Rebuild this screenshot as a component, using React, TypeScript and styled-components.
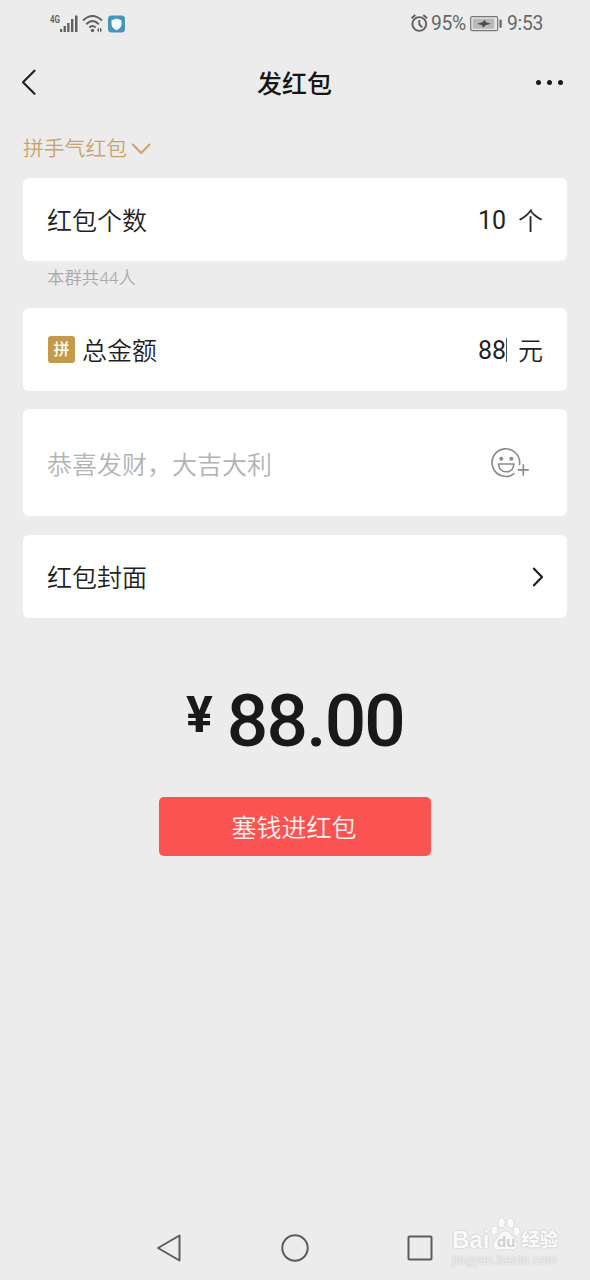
import React from "react";
import styled, { createGlobalStyle } from "styled-components";

const GlobalStyle = createGlobalStyle`
  * { box-sizing: border-box; }
  body {
    margin: 0;
    background: #ececec;
    color: #1f1f1f;
    font-family: Roboto, "Noto Sans CJK SC", sans-serif;
  }
  svg { display: block; flex: none; }
`;

const Screen = styled.div`
  width: 590px;
  height: 1280px;
  display: flex;
  flex-direction: column;
  overflow: hidden;
  background: #ececec;
`;

const StatusBar = styled.header`
  height: 47px;
  padding: 0 47px 0 49px;
  display: flex;
  justify-content: space-between;
  align-items: center;
  color: #666;
  font-size: 19.3px;
`;

const StatusGroup = styled.div`
  display: flex;
  align-items: center;
`;

const StatusText = styled.span<{ $width: number }>`
  width: ${(p) => p.$width}px;
  padding-top: 1px;
  line-height: 24px;
  white-space: nowrap;
  letter-spacing: -0.3px;
`;

const TitleBar = styled.div`
  height: 72px;
  padding: 0 27px 0 20px;
  display: grid;
  grid-template-columns: 60px 1fr 54px;
  align-items: center;
`;

const Title = styled.h1`
  margin: 0;
  padding-top: 3px;
  text-align: center;
  font-size: 25px;
  line-height: 36px;
  font-weight: 500;
  color: #161616;
`;

const MoreDots = styled.div`
  display: flex;
  justify-content: flex-end;
  gap: 6px;
  margin-top: -2px;
  span {
    width: 5px;
    height: 5px;
    border-radius: 50%;
    background: #1a1a1a;
  }
`;

const Form = styled.main`
  flex: 1;
  padding: 0 23px;
  display: flex;
  flex-direction: column;
`;

const TypePicker = styled.div`
  height: 59px;
  padding-top: 1px;
  display: flex;
  align-items: center;
  gap: 4px;
  color: #c8a46c;
  font-size: 20.8px;
  font-weight: 350;
  line-height: 30px;
`;

const Card = styled.section<{ $height?: number; $gap?: number }>`
  height: ${(p) => p.$height ?? 83}px;
  margin-bottom: ${(p) => p.$gap ?? 18}px;
  padding: 0 24px;
  display: flex;
  align-items: center;
  justify-content: space-between;
  flex: none;
  border-radius: 6px;
  background: #fff;
  font-size: 25px;
  line-height: 36px;
`;

const Label = styled.div`
  display: flex;
  align-items: center;
  gap: 7px;
  padding-top: 4px;
  font-weight: 350;
`;

const Badge = styled.span`
  width: 27px;
  height: 27px;
  margin: -5px 0 0 1px;
  border-radius: 3px;
  background: #c39a4b;
  color: #fff;
  font-size: 16px;
  font-weight: 500;
  line-height: 28px;
  text-align: center;
`;

const Value = styled.div`
  display: flex;
  align-items: center;
  padding-top: 3px;
`;

const Unit = styled.span`
  margin-left: 12px;
  padding-top: 1px;
  font-weight: 350;
`;

const Caret = styled.i`
  width: 1px;
  height: 24px;
  margin: -2px -1px 0 0;
  background: #555;
`;

const Hint = styled.p`
  height: 47px;
  margin: 0;
  padding: 4px 24px 0;
  color: #a9a9a9;
  font-size: 17.4px;
  font-weight: 350;
  line-height: 26px;
`;

const Placeholder = styled.span`
  padding-top: 6px;
  color: #b3b3b3;
  font-weight: 350;
`;

const Amount = styled.div`
  height: 80px;
  margin-top: 63px;
  display: flex;
  justify-content: center;
  align-items: flex-start;
  color: #191919;
  font-weight: 500;
`;

const Currency = styled.span`
  margin: 9px 14px 0 0;
  font-size: 50px;
  line-height: 50px;
  font-weight: 700;
`;

const Figure = styled.span`
  font-size: 73px;
  line-height: 80px;
  letter-spacing: -1.8px;
`;

const SubmitButton = styled.button`
  width: 272px;
  height: 59px;
  margin: 36px auto 0;
  border: 0;
  border-radius: 5px;
  background: #fb5351;
  color: #fff1ef;
  font: inherit;
  font-size: 25px;
  font-weight: 350;
  line-height: 36px;
  padding: 4px 2px 0 0;
`;

const NavBar = styled.nav`
  height: 64px;
  padding: 0 157px 0 156px;
  display: flex;
  justify-content: space-between;
  align-items: center;
`;

const Watermark = styled.div`
  position: absolute;
  left: 452px;
  top: 1215px;
  width: 108px;
  color: #fafafa;
  font-family: "Liberation Sans", "Noto Sans CJK SC", sans-serif;
  text-shadow: 0 0 1.5px #aaa;
`;

const WatermarkBrand = styled.div`
  height: 37px;
  display: flex;
  align-items: flex-end;
  font-size: 24px;
  line-height: 24px;
  font-weight: 700;
  b { font-size: 18.5px; margin-left: -1px; }
`;

const WatermarkUrl = styled.div`
  font-size: 12px;
  line-height: 14px;
  margin-top: 1px;
  letter-spacing: 0.5px;
  white-space: nowrap;
  color: #f1f1f1;
`;

const SignalIcon = () => (
  <svg width="80" height="24" viewBox="0 0 80 24" fill="#5f5f5f">
    <text x="1" y="10.500" fontSize="10.500" fontWeight="600" textLength="10" lengthAdjust="spacingAndGlyphs">4G</text>
    <rect x="11" y="17" width="2.200" height="3" />
    <rect x="14.600" y="14" width="2.300" height="6" />
    <rect x="18.200" y="11" width="2.300" height="9" />
    <rect x="22" y="7" width="2.400" height="13" />
    <rect x="26" y="3.500" width="2.500" height="16.500" />
    <g fill="none" stroke="#5f5f5f" strokeWidth="1.900">
      <path d="M34 8.500Q43.500-.5 53 8.500M37.200 12.200Q43.500 6 49.800 12.200M40.300 15.500Q43.500 12.300 46.700 15.500" />
    </g>
    <circle cx="43.500" cy="18.500" r="1.700" />
    <path d="M50 15.500v5l-2-2.500zM51 15.500v5l2-2.500z" />
    <rect x="59" y="3.500" width="17" height="17" rx="3.500" fill="#4795bd" />
    <path d="M67.500 6.500l5 1.800v3.600q0 4-5 6.300q-5-2.300-5-6.300V8.300z" fill="#f0fbff" />
  </svg>
);

const AlarmIcon = () => (
  <svg width="20" height="22" viewBox="0 0 20 22" fill="none" stroke="#5f5f5f" strokeWidth="1.900">
    <circle cx="8.300" cy="11" r="6.900" />
    <path d="M8.300 7v4.500l3 2.700M.5 5.300L4.300 2M12.300 2L16.100 5.300" />
  </svg>
);

const BatteryIcon = () => (
  <svg width="37" height="20" viewBox="0 0 37 20">
    <rect x=".7" y="2.700" width="27" height="14" rx="1.500" fill="#e5e5e5" stroke="#777" strokeWidth="1.200" />
    <rect x="2.800" y="4.700" width="21.500" height="10" fill="#b9b9b9" />
    <path d="M7 9.700l5.500-1.500 2.300-2.500 1.200 2.500 5 1.500-5.500 1.500-2.300 2.500-1.200-2.500z" fill="#4d4d4d" />
    <rect x="29.500" y="5.700" width="2.200" height="8" fill="#666" />
  </svg>
);

const BackIcon = () => (
  <svg width="20" height="28" viewBox="0 0 20 28" fill="none" stroke="#222" strokeWidth="2.200" strokeLinecap="round" strokeLinejoin="round">
    <path d="M14.500 1.700L3 13.200l11.500 11.500" />
  </svg>
);

const ChevronDown = () => (
  <svg width="20" height="14" viewBox="0 0 20 14" fill="none" stroke="#c8a46c" strokeWidth="2" strokeLinecap="round" strokeLinejoin="round">
    <path d="M1.800 2.500l8.400 8.500 8.300-8.500" />
  </svg>
);

const ChevronRight = () => (
  <svg width="11" height="20" viewBox="0 0 11 20" fill="none" stroke="#222" strokeWidth="2.300" strokeLinecap="round" strokeLinejoin="round">
    <path d="M2 1.700l8 8.300-8 8.300" />
  </svg>
);

const SmileyIcon = () => (
  <svg width="52" height="34" viewBox="0 0 52 34" fill="none" stroke="#8a8a8a" strokeWidth="1.600" strokeLinecap="round" strokeLinejoin="round">
    <path d="M22.900 27.800A13.800 13.800 0 1 1 28.500 18.500" />
    <circle cx="10.300" cy="12.700" r="2" fill="#8a8a8a" stroke="none" />
    <circle cx="20.300" cy="12.700" r="2" fill="#8a8a8a" stroke="none" />
    <path d="M7.500 18h15.400q-.7 7.800-7.700 7.800t-7.700-7.800z" />
    <path d="M32.300 18.200v11.500M26.800 23.900h11" strokeLinecap="butt" />
  </svg>
);

const PawIcon = () => (
  <svg width="33" height="36" viewBox="0 0 31 36" fill="#fafafa" stroke="#d4d4d4" strokeWidth=".7">
    <ellipse cx="4.500" cy="14.500" rx="3.400" ry="4.500" />
    <ellipse cx="11.500" cy="6.800" rx="3.600" ry="5" />
    <ellipse cx="20.500" cy="7.300" rx="3.600" ry="5" />
    <ellipse cx="26.700" cy="15.500" rx="3.400" ry="4.500" />
    <path d="M15.500 15c5 0 6 5 9.500 8.500 4.500 5 1.500 11-3.500 10.500-4-.5-8-.5-12 0-5 .5-9-4.500-4-10C9 20.500 10.500 15 15.500 15z" />
    <PawText x="7" y="31" fontSize="15" fontWeight="700">du</PawText>
  </svg>
);

const PawText = styled.text`
  fill: #cecece;
  stroke: none;
  text-shadow: none;
`;

export default function App() {
  return (
    <>
      <GlobalStyle />
      <Screen>
        <StatusBar>
          <StatusGroup>
            <SignalIcon />
          </StatusGroup>
          <StatusGroup>
            <AlarmIcon />
            <StatusText $width={39}>95%</StatusText>
            <BatteryIcon />
            <StatusText $width={36}>9:53</StatusText>
          </StatusGroup>
        </StatusBar>
        <TitleBar>
          <BackIcon />
          <Title>发红包</Title>
          <MoreDots><span /><span /><span /></MoreDots>
        </TitleBar>
        <Form>
          <TypePicker>拼手气红包<ChevronDown /></TypePicker>
          <Card $gap={0}>
            <Label>红包个数</Label>
            <Value>10<Unit>个</Unit></Value>
          </Card>
          <Hint>本群共44人</Hint>
          <Card>
            <Label><Badge>拼</Badge>总金额</Label>
            <Value>88<Caret /><Unit>元</Unit></Value>
          </Card>
          <Card $height={107} $gap={19}>
            <Placeholder>恭喜发财，大吉大利</Placeholder>
            <SmileyIcon />
          </Card>
          <Card $gap={0}>
            <Label>红包封面</Label>
            <ChevronRight />
          </Card>
          <Amount>
            <Currency>¥</Currency>
            <Figure>88.00</Figure>
          </Amount>
          <SubmitButton>塞钱进红包</SubmitButton>
        </Form>
        <NavBar>
          <svg width="26" height="30" viewBox="0 0 26 30" fill="none" stroke="#5c5c5c" strokeWidth="2" strokeLinejoin="round">
            <path d="M2 15L23.500 2.500v25z" />
          </svg>
          <svg width="28" height="28" viewBox="0 0 28 28" fill="none" stroke="#5c5c5c" strokeWidth="2">
            <circle cx="14" cy="14" r="12.700" />
          </svg>
          <svg width="26" height="26" viewBox="0 0 26 26" fill="none" stroke="#5c5c5c" strokeWidth="2">
            <rect x="1.500" y="1.500" width="23" height="23" rx="1" />
          </svg>
        </NavBar>
        <Watermark>
          <WatermarkBrand>Bai<PawIcon /><b>经验</b></WatermarkBrand>
          <WatermarkUrl>jingyan.baidu.com</WatermarkUrl>
        </Watermark>
      </Screen>
    </>
  );
}
